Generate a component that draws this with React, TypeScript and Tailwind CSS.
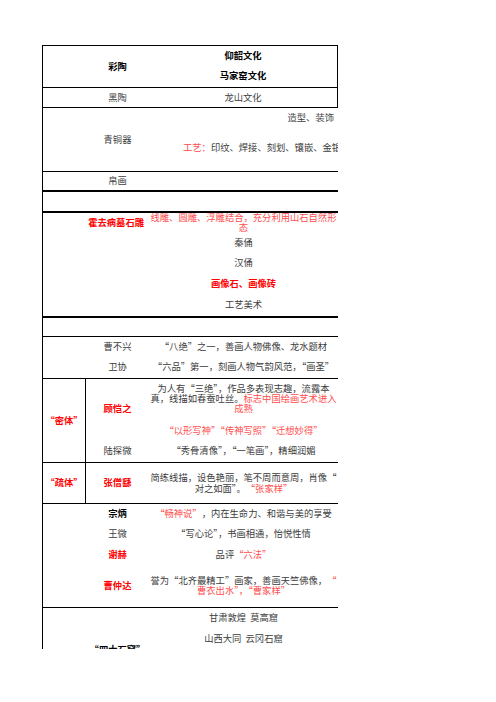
import React from "react";

const G = "text-[#3c3c3c]";
const RB = "text-[#ff0000] font-bold";
const LR = "text-[#ff4d4d]";

function L({ h = 20, className = "", children }: { h?: number | string; className?: string; children?: React.ReactNode }) {
  return (
    <div className={`flex items-center justify-center whitespace-pre leading-none ${className}`} style={{ height: h }}>
      {children}
    </div>
  );
}

export default function App() {
  return (
    <div className="w-[496px] h-[702px] bg-white font-['Noto_Sans_CJK_SC',sans-serif] text-[9.3px]">
      <div className="h-[45px]" />
      <div className="ml-[42px] w-[296px] h-[604px] overflow-hidden border-l border-t border-black">
        {/* R1 */}
        <div className="flex h-[42px] border-b border-r border-black">
          <div className="w-[43px]" />
          <div className="w-[63px] flex items-center justify-center font-bold text-black">彩陶</div>
          <div className="flex-1 flex flex-col font-bold text-black">
            <L>仰韶文化</L>
            <L>马家窑文化</L>
          </div>
        </div>
        {/* R2 */}
        <div className={`flex h-[20px] border-b border-r border-black ${G}`}>
          <div className="w-[43px]" />
          <div className="w-[63px] flex items-center justify-center">黑陶</div>
          <div className="flex-1 flex items-center justify-center">龙山文化</div>
        </div>
        {/* R3 */}
        <div className={`flex h-[64px] border-b border-black ${G}`}>
          <div className="w-[43px]" />
          <div className="w-[63px] flex items-center justify-center">青铜器</div>
          <div className="flex-1 flex flex-col min-w-0">
            <L className="justify-end! pr-[4px]">造型、装饰</L>
            <div className="mt-[10px] h-[20px] flex items-center pl-[34px] whitespace-nowrap overflow-hidden leading-none">
              <span className={LR}>工艺：</span>
              <span>印纹、焊接、刻划、镶嵌、金银错</span>
            </div>
          </div>
        </div>
        {/* R4 */}
        <div className={`flex h-[20px] border-b-2 border-black ${G}`}>
          <div className="w-[43px]" />
          <div className="w-[63px] flex items-center justify-center">帛画</div>
          <div className="flex-1" />
        </div>
        {/* R5 */}
        <div className="h-[21px] border-b-2 border-black" />
        {/* R6 */}
        <div className={`flex h-[105px] border-b-2 border-black ${G}`}>
          <div className="w-[43px]" />
          <div className="w-[63px] flex flex-col">
            <div className={`h-[20px] flex items-center justify-end pr-[5px] whitespace-nowrap leading-none ${RB}`}>霍去病墓石雕</div>
          </div>
          <div className="flex-1 flex flex-col">
            <L h={10} className={LR}>线雕、圆雕、浮雕结合，充分利用山石自然形</L>
            <L h={10} className={LR}>态</L>
            <L>秦俑</L>
            <L>汉俑</L>
            <L h={21} className={RB}>画像石、画像砖</L>
            <L h={21}>工艺美术</L>
          </div>
        </div>
        {/* R7 */}
        <div className="h-[19px] border-b border-black" />
        {/* R8 */}
        <div className={`flex h-[42px] border-b border-black ${G}`}>
          <div className="w-[43px]" />
          <div className="w-[63px] flex flex-col">
            <L>曹不兴</L>
            <L>卫协</L>
          </div>
          <div className="flex-1 flex flex-col">
            <L>“八绝”之一，善画人物佛像、龙水题材</L>
            <L>“六品”第一，刻画人物气韵风范，“画圣”</L>
          </div>
        </div>
        {/* R9 */}
        <div className={`flex h-[84px] border-b border-black ${G}`}>
          <div className={`w-[43px] border-r border-black flex items-center justify-center whitespace-nowrap ${RB}`}>“密体”</div>
          <div className="w-[63px] flex flex-col">
            <L className={`mt-[20px] ${RB}`}>顾恺之</L>
            <L className="mt-[22px]">陆探微</L>
          </div>
          <div className="flex-1 flex flex-col pt-[5px]">
            <L h={10}>为人有“三绝”，作品多表现志趣，流露本</L>
            <L h={10}>
              <span>真，线描如春蚕吐丝。</span>
              <span className={LR}>标志中国绘画艺术进入</span>
            </L>
            <L h={10} className={LR}>成熟</L>
            <L className={`mt-[7px] ${LR}`}>“以形写神”“传神写照”“迁想妙得”</L>
            <L>“秀骨清像”，“一笔画”，精细润媚</L>
          </div>
        </div>
        {/* R10 */}
        <div className={`flex h-[41px] border-b border-black ${G}`}>
          <div className={`w-[43px] border-r border-black flex items-center justify-center whitespace-nowrap ${RB}`}>“疏体”</div>
          <div className={`w-[63px] flex items-center justify-center ${RB}`}>张僧繇</div>
          <div className="flex-1 flex flex-col justify-center">
            <L h={10.5}>简练线描，设色艳丽，笔不周而意周，肖像“</L>
            <L h={10.5}>
              <span>对之如面”。</span>
              <span className={LR}>“张家样”</span>
            </L>
          </div>
        </div>
        {/* R11 */}
        <div className={`flex flex-col h-[104px] border-b border-black ${G}`}>
          <div className="flex h-[20px]">
            <div className="w-[43px]" />
            <L className="w-[63px] font-bold text-black">宗炳</L>
            <L className="flex-1">
              <span className={LR}>“畅神说”</span>
              <span>，内在生命力、和谐与美的享受</span>
            </L>
          </div>
          <div className="flex h-[20px]">
            <div className="w-[43px]" />
            <L className="w-[63px]">王微</L>
            <L className="flex-1">“写心论”，书画相通，怡悦性情</L>
          </div>
          <div className="flex h-[21px]">
            <div className="w-[43px]" />
            <L h={21} className={`w-[63px] ${RB}`}>谢赫</L>
            <L h={21} className="flex-1">
              <span>品评</span>
              <span className={LR}>“六法”</span>
            </L>
          </div>
          <div className="flex flex-1 items-center">
            <div className="w-[43px]" />
            <L className={`w-[63px] ${RB}`}>曹仲达</L>
            <div className="flex-1 flex flex-col">
              <L h={10}>
                <span>誉为“北齐最精工”画家，善画天竺佛像，</span>
                <span className={LR}>“</span>
              </L>
              <L h={10} className={LR}>曹衣出水”，“曹家样”</L>
            </div>
          </div>
        </div>
        {/* R12 */}
        <div className={`flex h-[60px] ${G}`}>
          <div className="w-[43px]" />
          <div className="w-[63px] flex flex-col">
            <L className="mt-[32px] font-bold text-black">“四大石窟”</L>
          </div>
          <div className="flex-1 flex flex-col">
            <L>甘肃敦煌  莫高窟</L>
            <L className="mt-[1px]">山西大同  云冈石窟</L>
          </div>
        </div>
      </div>
    </div>
  );
}
